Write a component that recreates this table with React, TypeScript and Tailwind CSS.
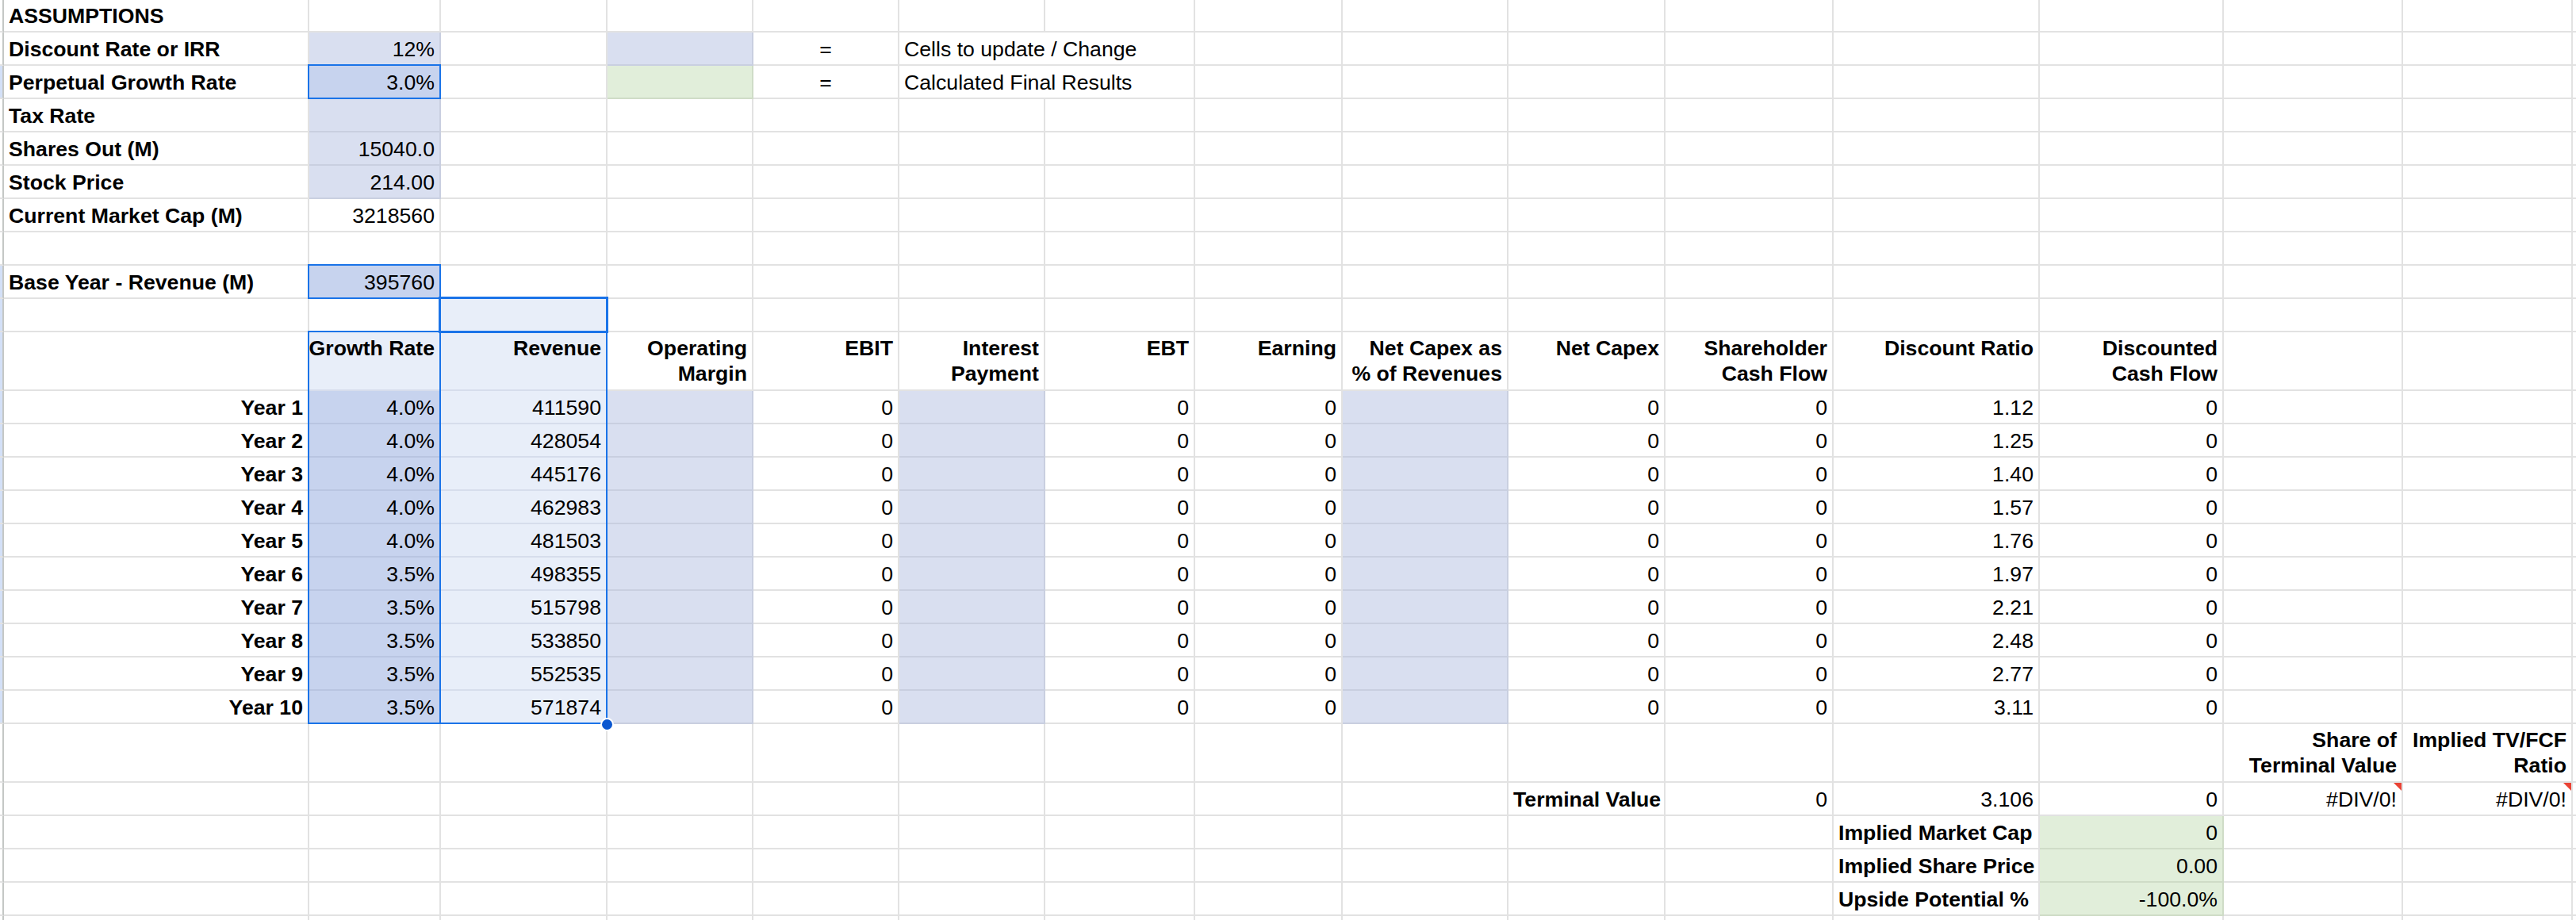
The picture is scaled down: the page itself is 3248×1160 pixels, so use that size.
import React from "react";

type Fill = "none" | "blue" | "blueSel" | "sel" | "green";
type Spec = {
  t?: React.ReactNode;
  a?: "l" | "r" | "c";
  b?: boolean;
  f?: Fill;
  span?: number;
  tri?: boolean;
};
type Row = { kind: "first" | "normal" | "tall"; strip: boolean; cells: Record<string, Spec> };

const fillCls: Record<Fill, string> = {
  none: "bg-white border-[#e2e2e2]",
  blue: "bg-[#d9dff0] border-[#c9cfe0]",
  blueSel: "bg-[#c7d3ee] border-[#b9c5e1]",
  sel: "bg-[#e8eef9] border-[#d6ddec]",
  green: "bg-[#e1eeda] border-[#cfdcc7]",
};
const alignCls = { l: "justify-start", r: "justify-end", c: "justify-center" };
const textAlignCls = { l: "text-left", r: "text-right", c: "text-center" };

const COLS = ["A", "B", "C", "D", "E", "F", "G", "H", "I", "J", "K", "L", "M", "N", "O", "P"];

const growth = ["4.0%", "4.0%", "4.0%", "4.0%", "4.0%", "3.5%", "3.5%", "3.5%", "3.5%", "3.5%"];
const revenue = ["411590", "428054", "445176", "462983", "481503", "498355", "515798", "533850", "552535", "571874"];
const ratio = ["1.12", "1.25", "1.40", "1.57", "1.76", "1.97", "2.21", "2.48", "2.77", "3.11"];

const rows: Row[] = [
  { kind: "first", strip: false, cells: { A: { t: "ASSUMPTIONS", b: true } } },
  {
    kind: "normal",
    strip: false,
    cells: {
      A: { t: "Discount Rate or IRR", b: true },
      B: { t: "12%", a: "r", f: "blue" },
      D: { f: "blue" },
      E: { t: "=", a: "c" },
      F: { t: "Cells to update / Change", span: 2 },
    },
  },
  {
    kind: "normal",
    strip: true,
    cells: {
      A: { t: "Perpetual Growth Rate", b: true },
      B: { t: "3.0%", a: "r", f: "blueSel" },
      D: { f: "green" },
      E: { t: "=", a: "c" },
      F: { t: "Calculated Final Results", span: 2 },
    },
  },
  { kind: "normal", strip: false, cells: { A: { t: "Tax Rate", b: true }, B: { f: "blue" } } },
  { kind: "normal", strip: false, cells: { A: { t: "Shares Out (M)", b: true }, B: { t: "15040.0", a: "r", f: "blue" } } },
  { kind: "normal", strip: false, cells: { A: { t: "Stock Price", b: true }, B: { t: "214.00", a: "r", f: "blue" } } },
  { kind: "normal", strip: false, cells: { A: { t: "Current Market Cap (M)", b: true }, B: { t: "3218560", a: "r" } } },
  { kind: "normal", strip: false, cells: {} },
  { kind: "normal", strip: true, cells: { A: { t: "Base Year - Revenue (M)", b: true }, B: { t: "395760", a: "r", f: "blueSel" } } },
  { kind: "normal", strip: true, cells: { C: { f: "sel" } } },
  {
    kind: "tall",
    strip: true,
    cells: {
      B: { t: "Growth Rate", a: "r", b: true, f: "sel" },
      C: { t: "Revenue", a: "r", b: true, f: "sel" },
      D: { t: <>Operating<br />Margin</>, a: "r", b: true },
      E: { t: "EBIT", a: "r", b: true },
      F: { t: <>Interest<br />Payment</>, a: "r", b: true },
      G: { t: "EBT", a: "r", b: true },
      H: { t: "Earning", a: "r", b: true },
      I: { t: <>Net Capex as<br />% of Revenues</>, a: "r", b: true },
      J: { t: "Net Capex", a: "r", b: true },
      K: { t: <>Shareholder<br />Cash Flow</>, a: "r", b: true },
      L: { t: "Discount Ratio", a: "r", b: true },
      M: { t: <>Discounted<br />Cash Flow</>, a: "r", b: true },
    },
  },
  ...growth.map((g, i): Row => ({
    kind: "normal",
    strip: true,
    cells: {
      A: { t: `Year ${i + 1}`, a: "r", b: true },
      B: { t: g, a: "r", f: "blueSel" },
      C: { t: revenue[i], a: "r", f: "sel" },
      D: { f: "blue" },
      E: { t: "0", a: "r" },
      F: { f: "blue" },
      G: { t: "0", a: "r" },
      H: { t: "0", a: "r" },
      I: { f: "blue" },
      J: { t: "0", a: "r" },
      K: { t: "0", a: "r" },
      L: { t: ratio[i], a: "r" },
      M: { t: "0", a: "r" },
    },
  })),
  {
    kind: "tall",
    strip: false,
    cells: {
      N: { t: <>Share of<br />Terminal Value</>, a: "r", b: true },
      O: { t: <>Implied TV/FCF<br />Ratio</>, a: "r", b: true },
    },
  },
  {
    kind: "normal",
    strip: false,
    cells: {
      J: { t: "Terminal Value", b: true },
      K: { t: "0", a: "r" },
      L: { t: "3.106", a: "r" },
      M: { t: "0", a: "r" },
      N: { t: "#DIV/0!", a: "r", tri: true },
      O: { t: "#DIV/0!", a: "r", tri: true },
    },
  },
  { kind: "normal", strip: false, cells: { L: { t: "Implied Market Cap", b: true }, M: { t: "0", a: "r", f: "green" } } },
  { kind: "normal", strip: false, cells: { L: { t: "Implied Share Price", b: true }, M: { t: "0.00", a: "r", f: "green" } } },
  { kind: "normal", strip: false, cells: { L: { t: "Upside Potential %", b: true }, M: { t: "-100.0%", a: "r", f: "green" } } },
  { kind: "normal", strip: false, cells: {} },
];

function Cell({ spec, tall }: { spec: Spec; tall: boolean }) {
  const a = spec.a ?? "l";
  const f = spec.f ?? "none";
  return (
    <div
      className={`relative flex whitespace-nowrap border-r-2 border-b-2 px-[6px] ${fillCls[f]} ${alignCls[a]} ${
        tall ? "items-start pt-[4px]" : "items-end pb-[3px]"
      } ${spec.span === 2 ? "col-span-2" : ""}`}
    >
      {spec.t !== undefined && (
        <span className={`${textAlignCls[a]} ${spec.b ? "font-bold" : "font-normal"}`}>{spec.t}</span>
      )}
      {spec.tri && (
        <svg className="absolute right-0 top-0" width="10" height="10" viewBox="0 0 10 10">
          <polygon points="0,0 10,0 10,10" fill="#ea4335" />
        </svg>
      )}
    </div>
  );
}

export default function App() {
  return (
    <div className="relative h-[1160px] w-[3248px] overflow-hidden bg-white font-['Liberation_Sans',Arial,sans-serif] text-[26.67px] leading-[32px] text-black">
      <div className="grid grid-cols-[5px_385px_166px_210px_184px_184px_184px_189px_186px_209px_198px_212px_260px_232px_226px_214px_100px] grid-rows-[41px_repeat(9,42px)_74px_repeat(10,42px)_74px_repeat(5,42px)]">
        {rows.map((row, ri) => {
          const out: React.ReactNode[] = [];
          out.push(
            <div
              key={`s${ri}`}
              className={`border-r-2 border-b-2 border-b-[#e2e2e2] border-r-[#c4c7c5] ${
                row.strip ? "bg-[#d3e0f7]" : "bg-white"
              }`}
            />
          );
          let skip = 0;
          COLS.forEach((c) => {
            if (skip > 0) {
              skip--;
              return;
            }
            const spec = row.cells[c] ?? {};
            if (spec.span === 2) skip = 1;
            out.push(<Cell key={`${ri}${c}`} spec={spec} tall={row.kind === "tall"} />);
          });
          return out;
        })}
      </div>

      {/* selection outlines */}
      <div className="absolute left-[388px] top-[81px] h-[44px] w-[168px] border-2 border-[#1a73e8]" />
      <div className="absolute left-[388px] top-[333px] h-[44px] w-[168px] border-2 border-[#1a73e8]" />
      <div className="absolute left-[553px] top-[374px] h-[46px] w-[214px] border-[3px] border-[#1a73e8]" />
      <div className="absolute left-[388px] top-[417px] h-[496px] w-[378px] border-2 border-[#1a73e8]" />
      <div className="absolute left-[554px] top-[417px] h-[496px] w-[2px] bg-[#1a73e8]" />
      <div className="absolute left-[757px] top-[905px] h-[17px] w-[17px] rounded-full border-2 border-white bg-[#0b57d0]" />
    </div>
  );
}
